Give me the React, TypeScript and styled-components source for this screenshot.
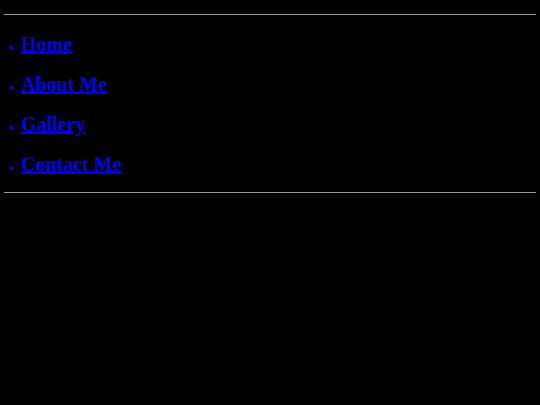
import React from 'react';
import styled, { createGlobalStyle } from 'styled-components';

const GlobalStyle = createGlobalStyle`
  html, body {
    margin: 0;
    padding: 0;
    background: #000000;
  }
  body {
    padding: 4px;
    font-family: "Liberation Serif", "Times New Roman", serif;
  }
`;

const Rule = styled.hr<{ $gap: number }>`
  border: 0;
  border-top: 1px solid #9a9a9a;
  margin: ${({ $gap }) => $gap}px 0 0;
  height: 0;
`;

const Menu = styled.ul`
  list-style: none;
  margin: 0;
  padding: 12px 0 0 5px;
`;

const Item = styled.li`
  display: flex;
  align-items: center;
  height: 40px;
  padding-bottom: 6px;
  box-sizing: border-box;

  &::before {
    content: '';
    width: 4px;
    height: 4px;
    border-radius: 50%;
    background: #0000ee;
    margin: 7px 8px 0 0;
    flex: none;
  }
`;

const MenuLink = styled.a`
  color: #0000ee;
  font-size: 20px;
  line-height: 24px;
  font-weight: bold;
  text-decoration: underline;
`;

const links = ['Home', 'About Me', 'Gallery', 'Contact Me'];

const App: React.FC = () => {
  return <>
    <GlobalStyle />
    <Rule $gap={10} />
    <Menu>
      {links.map(label => (
        <Item key={label}>
          <MenuLink href='#'>{label}</MenuLink>
        </Item>
      ))}
    </Menu>
    <Rule $gap={5} />
  </>;
};

export default App;
